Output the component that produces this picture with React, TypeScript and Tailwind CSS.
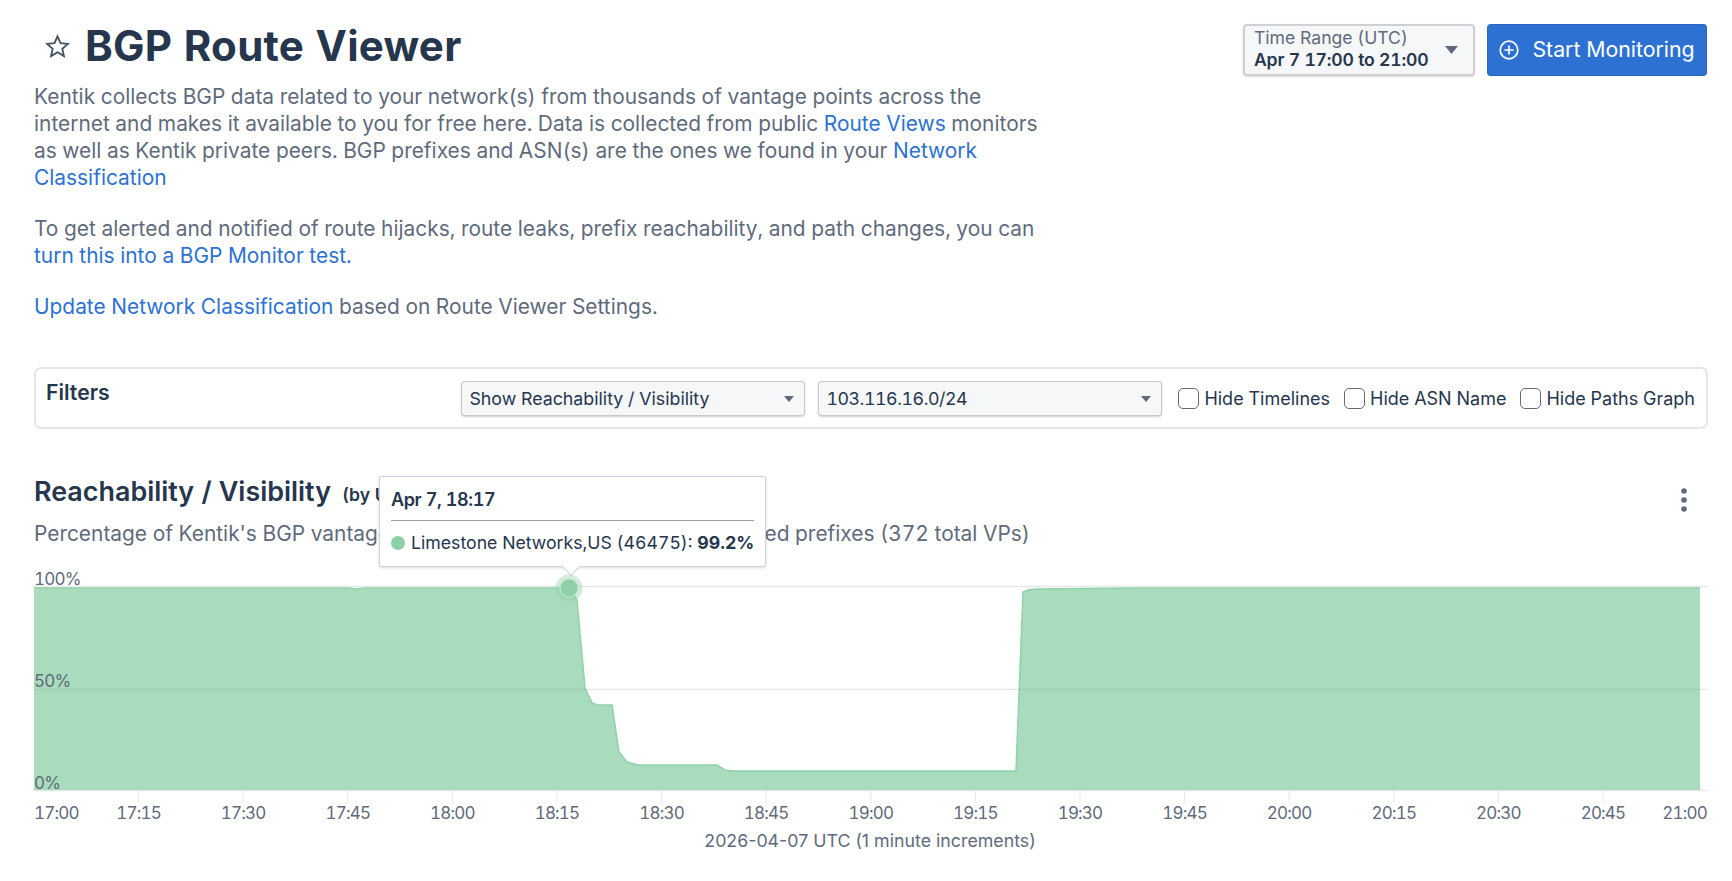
const TICKS = ['17:15', '17:30', '17:45', '18:00', '18:15', '18:30', '18:45', '19:00', '19:15', '19:30', '19:45', '20:00', '20:15', '20:30', '20:45'];

const TOP_LINE =
    '34,588 350,588 356,589 365,588 569,588 577,600 585,688 592,703 598,705 612,705 619,752 627,762 638,765 717,765 725,770 732,771 1016,771 1023,592 1030,589.5 1038,589 1139,588 1700,588';

function Caret({ className }: { className: string }) {
    return (
        <svg viewBox="0 0 10 6" className={className}>
            <path d="M0 0h10L5 6z" fill="#5f6b7c" />
        </svg>
    );
}

function Select({ label, className }: { label: string; className: string }) {
    return (
        <div className={`flex h-[35px] items-center justify-between rounded-[4px] bg-[#f6f7f9] pl-[8px] pr-[11px] text-[17.8px] text-[#25364d] shadow-[inset_0_0_0_1px_rgba(17,20,24,0.2),0_1px_2px_rgba(17,20,24,0.2)] ${className}`}>
            <span>{label}</span>
            <Caret className="w-[10px] h-[6px]" />
        </div>
    );
}

function Check({ label, className }: { label: string; className: string }) {
    return (
        <label className={`flex items-center gap-[5px] text-[18px] text-[#25364d] ${className}`}>
            <input type="checkbox" className="appearance-none w-[21px] h-[21px] rounded-[5px] border border-[#5f6b7c] bg-white" />
            {label}
        </label>
    );
}

function Chart() {
    return (
        <svg viewBox="34 570 1674 290" className="block w-[1674px] h-[290px] mt-[22.5px]">
            <path d="M34 586.5H1708M34 689.5H1708M34 790.5H1708" stroke="#e5e8eb" strokeWidth="1.5" fill="none" />
            {TICKS.map((t, i) => (
                <path key={t} d={`M${138.6 + i * 104.6} 790V803`} stroke="#e5e8eb" strokeWidth="1" />
            ))}
            <polygon points={`${TOP_LINE} 1700,790 34,790`} fill="#53b87c" fillOpacity="0.5" />
            <polyline points={TOP_LINE} fill="none" stroke="#8ed2a8" strokeWidth="1.5" />
            <circle cx="569" cy="588" r="13.5" fill="#8ed0a8" fillOpacity="0.4" />
            <circle cx="569" cy="588" r="9" fill="#8ed0a8" stroke="#c6e7d3" strokeWidth="1" />

            <g className="fill-[#5f6b7c] text-[17px] tracking-[-0.8px]">
                <text x="34" y="585">100%</text>
                <text x="34" y="687">50%</text>
                <text x="34" y="789">0%</text>
                <text x="34" y="819">17:00</text>
                {TICKS.map((t, i) => (
                    <text key={t} x={138.6 + i * 104.6} y="819" textAnchor="middle">{t}</text>
                ))}
                <text x="1707" y="819" textAnchor="end">21:00</text>
                <text x="870" y="847" textAnchor="middle" className="text-[17.8px] tracking-normal normal-nums">2026-04-07 UTC (1 minute increments)</text>
            </g>
        </svg>
    );
}

export default function App() {
    const link = 'text-[#2d72d2]';
    return (
        <div className="relative min-h-screen bg-white pl-[34px] pr-[24px] font-['Inter',sans-serif] text-[20.9px] leading-[27px] text-[#5f6b7c] tabular-nums">
            <div className="flex items-start justify-between">
                <div className="w-[1020px]">
                    <div className="flex items-center pt-[22px] pl-[11px]">
                        <svg viewBox="0 0 24 24" className="w-[25px] h-[25px]" fill="none" stroke="#404f63" strokeWidth="1.7" strokeLinejoin="miter">
                            <path d="M12 2.2l2.9 6.6 7.1.7-5.4 4.7 1.6 7-6.2-3.7-6.2 3.7 1.6-7L2 9.5l7.1-.7z" />
                        </svg>
                        <h1 className="ml-[15px] text-[42px] leading-[48px] tracking-[0.25px] font-bold text-[#25364d]">BGP Route Viewer</h1>
                    </div>
                    <p className="mt-[12.5px]">
                        Kentik collects BGP data related to your network(s) from thousands of vantage points across the internet and makes it available to you for free here. Data is collected from public <a className={link}>Route Views</a> monitors as well as Kentik private peers. BGP prefixes and ASN(s) are the ones we found in your <a className={link}>Network Classification</a>
                    </p>
                    <p className="mt-[24px]">
                        To get alerted and notified of route hijacks, route leaks, prefix reachability, and path changes, you can <a className={link}>turn this into a BGP Monitor test.</a>
                    </p>
                    <p className="mt-[24px]">
                        <a className={link}>Update Network Classification</a> based on Route Viewer Settings.
                    </p>
                </div>
                <div className="mr-[1px] flex items-center gap-[12px] pt-[23.5px]">
                    <div className="flex h-[52px] w-[232px] items-center justify-between rounded-[4px] bg-[#f6f7f9] pl-[11px] pr-[17px] shadow-[inset_0_0_0_2px_rgba(17,20,24,0.17),0_1px_2px_rgba(17,20,24,0.15)]">
                        <div className="pb-[2px] text-[17.6px] leading-[22px]">
                            <div>Time Range (UTC)</div>
                            <div className="font-semibold tracking-[-0.2px] text-[#25364d]">Apr 7 17:00 to 21:00</div>
                        </div>
                        <Caret className="w-[13px] h-[8px]" />
                    </div>
                    <button type="button" className="flex h-[52px] w-[220px] items-center justify-center gap-[13px] rounded-[4px] bg-[#2d72d2] text-[21.3px] text-white shadow-[inset_0_0_0_1px_rgba(17,20,24,0.1)]">
                        <svg viewBox="0 0 20 20" className="w-[20px] h-[20px]" fill="none" stroke="#fff" strokeWidth="1.7">
                            <circle cx="10" cy="10" r="8.8" />
                            <path d="M10 5.5v9M5.5 10h9" />
                        </svg>
                        Start Monitoring
                    </button>
                </div>
            </div>

            <div className="mt-[47.5px] flex h-[62px] items-start rounded-[7px] border-2 border-[#e4e6e9] pl-[10px]">
                <span className="mt-[10px] text-[21.2px] font-semibold text-[#25364d]">Filters</span>
                <div className="ml-auto mt-[12px] flex items-center pr-[11px]">
                    <Select label="Show Reachability / Visibility" className="w-[344px]" />
                    <Select label="103.116.16.0/24" className="ml-[13px] w-[344px] tracking-[-0.45px]" />
                    <Check label="Hide Timelines" className="ml-[16px]" />
                    <Check label="Hide ASN Name" className="ml-[14px]" />
                    <Check label="Hide Paths Graph" className="ml-[14px]" />
                </div>
            </div>

            <div className="mt-[48px] flex h-[32px] items-center justify-between">
                <h2 className="text-[26.9px] leading-[32px] font-semibold text-[#25364d]">
                    Reachability / Visibility <span className="ml-[4px] text-[17.6px]">(by Upstream)</span>
                </h2>
                <svg viewBox="0 0 8 24" className="mr-[20px] mt-[14px] w-[8px] h-[24px]" fill="#5f6b7c">
                    <circle cx="4" cy="3" r="2.8" />
                    <circle cx="4" cy="12" r="2.8" />
                    <circle cx="4" cy="21" r="2.8" />
                </svg>
            </div>
            <p className="mt-[11px]">Percentage of Kentik's BGP vantage points that currently see your monitored prefixes (372 total VPs)</p>

            <Chart />

            <div className="absolute left-[379px] top-[476px] w-[387px] h-[91px] rounded-[2px] border border-[#cfd2d6] bg-white px-[11px] shadow-[0_1px_3px_rgba(17,20,24,0.15)]">
                <div className="h-[44px] border-b border-[#a0a4a8] pt-[11px] text-[18px] leading-[24px] tracking-[-0.4px] font-semibold text-[#25364d]">Apr 7, 18:17</div>
                <div className="mt-[10px] flex items-center gap-[6px] whitespace-nowrap text-[17.7px] leading-[24px] text-[#25364d]">
                    <span className="shrink-0 w-[14px] h-[14px] rounded-full bg-[#8ed0a8]" />
                    <span>Limestone Networks,US (46475): <b className="font-bold">99.2%</b></span>
                </div>
                <div className="absolute left-[184px] top-[82px] w-[14px] h-[14px] rotate-45 border-r border-b border-[#cfd2d6] bg-white" />
            </div>
        </div>
    );
}
